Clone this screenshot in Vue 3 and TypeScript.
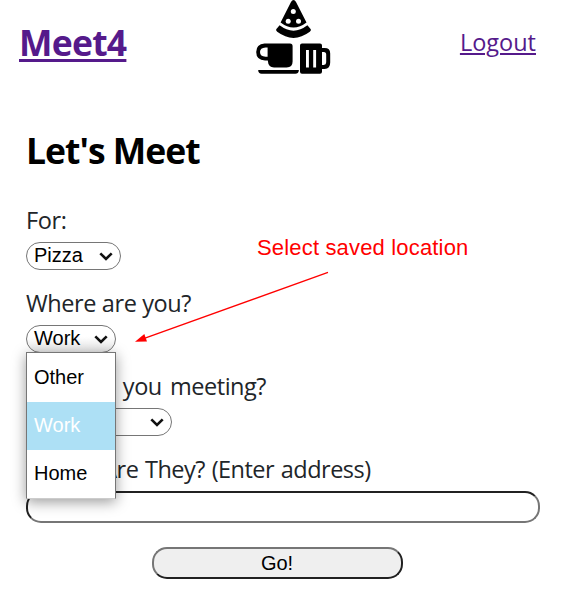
<script setup lang="ts">
import { ref } from 'vue'

interface Field {
  key: string
  label: string
  value: string
}

const fields: Field[] = [
  { key: 'purpose', label: 'For:', value: 'Pizza' },
  { key: 'origin', label: 'Where are you?', value: 'Work' },
  { key: 'person', label: 'Who are you meeting?', value: 'Friend' },
]
const locations: string[] = ['Other', 'Work', 'Home']
const selected = ref('Work')
const address = ref('')
</script>

<template>
  <div class="page">
    <header class="header">
      <a class="brand" href="#">Meet4</a>
      <svg class="logo" viewBox="0 0 76 76" width="76" height="76" aria-hidden="true">
        <path d="M38.5 0 Q37 0 36 2 L25.6 22.5 Q38.5 32.5 51.5 22.5 L41 2 Q40 0 38.5 0Z" />
        <path d="M24.6 25.3 Q38.5 36 52.4 25.3 L55.8 29.2 Q56.3 30.6 54.8 31.8 Q38.5 44 22.2 31.8 Q20.7 30.6 21.2 29.2Z" />
        <g fill="#fff">
          <circle cx="38.3" cy="11.5" r="2.5" />
          <circle cx="33.2" cy="21.3" r="2.5" />
          <circle cx="43.5" cy="21.3" r="2.5" />
        </g>
        <path fill-rule="evenodd" d="M13 43.6 H35 Q37.6 43.6 37.6 46.2 V61.5 Q37.6 67.4 31.6 67.4 H19 Q13.2 67.4 12.8 60.5 H10 Q1.2 60 1.2 52 Q1.2 44.3 9.5 43.6Z M10.5 47.5 Q5 47.8 5 52 Q5 56.4 10.5 56.8 H12.6 V47.5Z" />
        <path d="M3.2 70 H43.8 V70.8 Q43.4 73.8 40.4 73.8 H6.6 Q3.3 73.8 3.2 70Z" />
        <path fill-rule="evenodd" d="M47 43.6 H65 Q67 43.6 67 45.6 V48 H69.6 Q75.2 48 75.2 53.4 V62.6 Q75.2 68.8 69.6 69 H67 V71.8 Q67 73.8 65 73.8 H47 Q45 73.8 45 71.8 V45.6 Q45 43.6 47 43.6Z M51 50 V67.5 H53.9 V50Z M58.2 50 V67.5 H61.1 V50Z M67 52 V65 H68.8 Q71.2 64.8 71.2 62.2 V54.6 Q71.2 52 68.8 52Z" />
      </svg>
      <a class="logout" href="#">Logout</a>
    </header>

    <main class="content">
      <h2 class="title">Let's Meet</h2>
      <form class="form" @submit.prevent>
        <div v-for="field in fields" :key="field.key" class="field" :class="field.key">
          <span class="label">{{ field.label }}</span>
          <div class="select">
            <span>{{ field.key === 'origin' ? selected : field.value }}</span>
            <svg class="chevron" viewBox="0 0 14 9" width="14" height="9"><path d="M1.3 1.3 L7 7 L12.7 1.3" /></svg>
            <ul v-if="field.key === 'origin'" class="menu">
              <li v-for="place in locations" :key="place" :class="{ active: place === selected }" @click="selected = place">{{ place }}</li>
            </ul>
          </div>
        </div>
        <div class="field destination">
          <label class="label" for="address">Where Are They? (Enter address)</label>
          <input id="address" v-model="address" class="address" type="text" />
        </div>
        <button class="go" type="submit">Go!</button>
      </form>
    </main>

    <div class="note">Select saved location</div>
    <svg class="arrow" viewBox="0 0 196 74" width="196" height="74" aria-hidden="true">
      <path d="M193 2.3 L10 68.2" fill="none" stroke="#f00" stroke-width="1.3" />
      <path d="M0 71.8 L9.3 64 L12 71.6Z" fill="#f00" />
    </svg>
  </div>
</template>

<style>
body {
  margin: 0;
  background: #fff;
}
</style>

<style scoped>
.page {
  position: relative;
  box-sizing: border-box;
  width: 576px;
  height: 602px;
  overflow: hidden;
  font-family: "Open Sans", "Noto Sans", sans-serif;
  color: #212529;
}
.header {
  display: grid;
  grid-template-columns: 236px 1fr auto;
  height: 84px;
  padding: 0 40px 0 19px;
}
.brand,
.logout {
  color: #551a8b;
  white-space: nowrap;
}
.brand {
  justify-self: start;
  padding-top: 17px;
  font-size: 35.5px;
  line-height: 50px;
  font-weight: 700;
  letter-spacing: -0.75px;
  text-decoration-thickness: 3px;
  text-underline-offset: 3px;
}
.logout {
  padding-top: 24px;
  font-size: 23.5px;
  line-height: 36px;
  text-decoration-thickness: 2px;
  text-underline-offset: 2px;
}
.content {
  padding: 0 36px 0 26px;
}
.title {
  margin: 0;
  padding-top: 41px;
  font-size: 35.5px;
  line-height: 50px;
  font-weight: 700;
  letter-spacing: -1px;
  color: #000;
}
.form {
  display: flex;
  flex-direction: column;
  padding-top: 25px;
}
.field {
  height: 83px;
}
.label {
  display: block;
  height: 42px;
  font-size: 23.5px;
  line-height: 40px;
  letter-spacing: -0.4px;
  white-space: nowrap;
}
.person .label {
  letter-spacing: -0.47px;
  word-spacing: 2.6px;
}
.person .label::first-letter {
  letter-spacing: -3.4px;
}
.destination .label {
  letter-spacing: -0.53px;
  word-spacing: 1.2px;
}
.select {
  position: relative;
  display: flex;
  box-sizing: border-box;
  align-items: center;
  justify-content: space-between;
  width: 95px;
  height: 28px;
  padding: 0 7px 2px;
  border: 1.5px solid #767676;
  border-radius: 14px;
  font: 20px/24px "Liberation Sans", Arial, sans-serif;
  color: #000;
}
.chevron {
  position: relative;
  top: 1px;
  fill: none;
  stroke: #111;
  stroke-width: 2.6;
}
.origin .select {
  width: 90px;
  background: linear-gradient(#fff 40%, #e8e8e8);
}
.person .select {
  width: 146px;
}
.menu {
  position: absolute;
  z-index: 2;
  top: 26px;
  left: -1px;
  box-sizing: border-box;
  width: 90px;
  height: 147px;
  margin: 0;
  padding: 1px 0 0;
  border: 1px solid #767676;
  border-bottom-color: #ccc;
  background: #fff;
  box-shadow: 0 3px 13px rgba(0, 0, 0, 0.4);
  list-style: none;
}
.menu li {
  height: 48px;
  padding-left: 7px;
  line-height: 47px;
}
.menu .active {
  background: #ade0f5;
  color: #fff;
}
.address {
  display: block;
  box-sizing: border-box;
  width: 514px;
  height: 32px;
  padding: 0 10px;
  border: 2px inset #767676;
  border-radius: 15px;
  background: #fff;
}
.destination {
  height: 98px;
}
.go {
  align-self: center;
  box-sizing: border-box;
  width: 251px;
  height: 32px;
  padding: 0;
  margin-right: 12px;
  border: 2px outset #767676;
  border-radius: 15px;
  background: #efefef;
  color: #000;
  font: 20px/26px "Liberation Sans", Arial, sans-serif;
}
.note {
  position: absolute;
  top: 234px;
  left: 257px;
  font: 22px/28px "Liberation Sans", Arial, sans-serif;
  letter-spacing: 0.17px;
  color: #f00;
  white-space: nowrap;
}
.arrow {
  position: absolute;
  top: 270px;
  left: 135px;
}
</style>
